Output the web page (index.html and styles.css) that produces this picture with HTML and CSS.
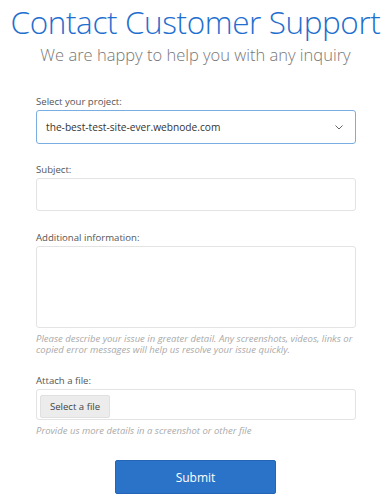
FILE: index.html
```html
<!DOCTYPE html>
<html lang="en">
<head>
  <meta charset="UTF-8" />
  <meta name="viewport" content="width=device-width, initial-scale=1.0"/>
  <title>Contact Customer Support</title>
  <link rel="stylesheet" href="styles.css">
</head>
<body>
  <div class="page">
    <h1>Contact Customer Support</h1>
    <p class="lead">We are happy to help you with any inquiry</p>

    <form class="form">
      <div class="field">
        <label>Select your project:</label>
        <div class="select">
          <span>the-best-test-site-ever.webnode.com</span>
          <svg width="8" height="5" viewBox="0 0 8 5"><path d="M0.5 0.5l3.5 3.5 3.5-3.5" fill="none" stroke="#666" stroke-width="1"/></svg>
        </div>
      </div>

      <div class="field">
        <label>Subject:</label>
        <div class="input"></div>
      </div>

      <div class="field">
        <label>Additional information:</label>
        <div class="input textarea"></div>
        <p class="hint">Please describe your issue in greater detail. Any screenshots, videos, links or copied error messages will help us resolve your issue quickly.</p>
      </div>

      <div class="field">
        <label>Attach a file:</label>
        <div class="input file"><span class="file-btn">Select a file</span></div>
        <p class="hint">Provide us more details in a screenshot or other file</p>
      </div>

      <div class="actions">
        <button type="button" class="submit">Submit</button>
      </div>
    </form>
  </div>
</body>
</html>
```

FILE: styles.css
```css
* {
  margin: 0;
  padding: 0;
  box-sizing: border-box;
}

body {
  background: #fff;
  font-family: 'Open Sans', sans-serif;
  color: #333;
}

.page {
  width: 391px;
}

h1 {
  font-size: 31.5px;
  font-weight: 300;
  color: #1f6fcf;
  text-align: center;
  line-height: 43px;
  letter-spacing: -0.4px;
  white-space: nowrap;
}

.lead {
  text-align: center;
  font-size: 16.5px;
  font-weight: 300;
  color: #777;
  line-height: 23px;
}

.form {
  padding: 30px 35px 0 36px;
}

.field {
  margin-bottom: 20px;
}

.field label {
  display: block;
  font-size: 9.6px;
  color: #555;
  line-height: 12px;
  margin-bottom: 2px;
}

.select {
  height: 34px;
  border: 1px solid #7aaee3;
  border-radius: 3px;
  display: flex;
  align-items: center;
  justify-content: space-between;
  padding: 0 12px 0 9px;
  font-size: 10.2px;
  color: #333;
}

.input {
  height: 33px;
  border: 1px solid #e3e3e3;
  border-radius: 3px;
}

.textarea {
  height: 82px;
}

.file {
  height: 31px;
  padding: 3px;
}

.file-btn {
  display: inline-block;
  width: 70px;
  height: 23px;
  line-height: 22px;
  text-align: center;
  background: #ececec;
  border: 1px solid #e0e0e0;
  border-radius: 2px;
  font-size: 9.6px;
  color: #444;
}

.hint {
  font-size: 9.5px;
  font-style: italic;
  color: #aaa;
  line-height: 11px;
  margin-top: 5px;
}

.field:nth-child(2) {
  margin-bottom: 21px;
}

.field:nth-child(4) {
  margin-bottom: 24px;
}

.actions {
  display: flex;
  justify-content: center;
  padding-right: 1px;
}

.submit {
  width: 161px;
  height: 34px;
  background: #2a73c8;
  border: 1px solid #2466b5;
  border-radius: 2px;
  color: #fff;
  font-family: 'Open Sans', sans-serif;
  font-size: 12px;
}
```
